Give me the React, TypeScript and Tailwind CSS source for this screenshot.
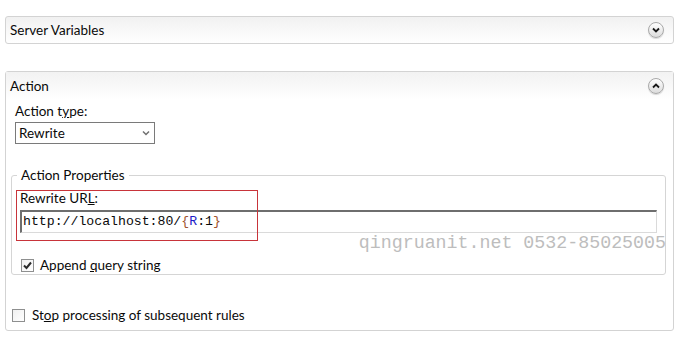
import React from 'react';

function RoundChevron({ up }: { up?: boolean }) {
  return (
    <div className="flex h-[16px] w-[16px] items-center justify-center rounded-full border border-[#a9a9a9] bg-gradient-to-b from-[#ffffff] to-[#dcdcdc] shadow-[0_1px_1px_rgba(0,0,0,0.15)]">
      <svg width="8" height="6" viewBox="0 0 8 6">
        {up ? (
          <path d="M1 4.5 L4 1.5 L7 4.5" fill="none" stroke="#1a1a1a" strokeWidth="1.8" />
        ) : (
          <path d="M1 1.5 L4 4.5 L7 1.5" fill="none" stroke="#1a1a1a" strokeWidth="1.8" />
        )}
      </svg>
    </div>
  );
}

function Checkbox({ checked }: { checked?: boolean }) {
  return (
    <div className="flex h-[13px] w-[13px] items-center justify-center border border-[#8e8f8f] bg-gradient-to-br from-[#f0f0f0] to-[#ffffff]">
      {checked && (
        <svg width="9" height="9" viewBox="0 0 9 9">
          <path d="M1 4.5 L3.5 7 L8 1.5" fill="none" stroke="#2a2a2a" strokeWidth="2" />
        </svg>
      )}
    </div>
  );
}

export default function App() {
  return (
    <div
      className="h-[340px] w-[678px] bg-white pt-[16px] text-[13.5px] text-[#0a0a0a]"
      style={{ fontFamily: 'Lato, "Noto Sans", sans-serif' }}
    >
      {/* Server Variables */}
      <div className="ml-[5px] mr-[4px] flex h-[28px] items-center justify-between rounded-[3px] border border-[#d3d3d3] bg-gradient-to-b from-[#f1f1f1] to-[#ffffff] pl-[4px] pr-[9px]">
        <span className="leading-[16px]">Server Variables</span>
        <RoundChevron />
      </div>

      {/* Action */}
      <div className="ml-[5px] mr-[4px] mt-[27px] rounded-[3px] border border-[#d3d3d3] pb-[7px]">
        <div className="flex h-[28px] items-center justify-between bg-gradient-to-b from-[#f2f2f2] to-[#ffffff] pl-[4px] pr-[9px]">
          <span className="leading-[16px]">Action</span>
          <RoundChevron up />
        </div>

        <div className="mt-[3px] pl-[9px] leading-[16px]">
          Action t<span className="underline">y</span>pe:
        </div>
        <div className="ml-[9px] mt-[3px] flex h-[22px] w-[140px] items-center justify-between border border-[#7a7a7a] bg-white pl-[3px] pr-[4px]">
          <span className="leading-[16px]">Rewrite</span>
          <svg width="8" height="6" viewBox="0 0 8 6">
            <path d="M1 1.5 L4 4.5 L7 1.5" fill="none" stroke="#707070" strokeWidth="1.5" />
          </svg>
        </div>

        <fieldset className="ml-[5px] mr-[7px] mt-[23px] rounded-[3px] border border-[#d5d5d5] pb-[1px]">
          <legend className="ml-[5px] px-[4px] leading-[16px]">Action Properties</legend>

          <div className="relative mt-[7px] pl-[8px] pr-[8px]">
            <div className="leading-[16px]">
              Rewrite UR<span className="underline">L</span>:
            </div>
            <div
              className="mt-[4px] flex h-[23px] items-center border-b border-l-2 border-r border-t-2 border-b-[#dadada] border-l-[#6e6e6e] border-r-[#dadada] border-t-[#6e6e6e] bg-white pl-[1px] text-[13.2px]"
              style={{ fontFamily: '"Liberation Mono", monospace' }}
            >
              <span>http://localhost:80/</span>
              <span className="text-[#a0522d]">{'{'}</span>
              <span className="text-[#1c1cc8]">R</span>
              <span>:1</span>
              <span className="text-[#a0522d]">{'}'}</span>
            </div>
            <div className="pointer-events-none absolute left-[4px] top-0 h-[51px] w-[242px] border border-[#c8343a]" />
            <div
              className="pointer-events-none absolute right-[-1px] top-[43px] text-[18.3px] leading-[20px] text-[#bdbdbd]"
              style={{ fontFamily: '"Liberation Mono", monospace' }}
            >
              qingruanit.net 0532-85025005
            </div>
          </div>

          <div className="mt-[24px] flex h-[16px] items-center gap-[6px] pl-[9px]">
            <Checkbox checked />
            <span className="leading-[16px]">
              Append <span className="underline">q</span>uery string
            </span>
          </div>
        </fieldset>

        <div className="mt-[32px] flex h-[16px] items-center gap-[7px] pl-[6px]">
          <Checkbox />
          <span className="leading-[16px]">
            St<span className="underline">o</span>p processing of subsequent rules
          </span>
        </div>
      </div>
    </div>
  );
}
